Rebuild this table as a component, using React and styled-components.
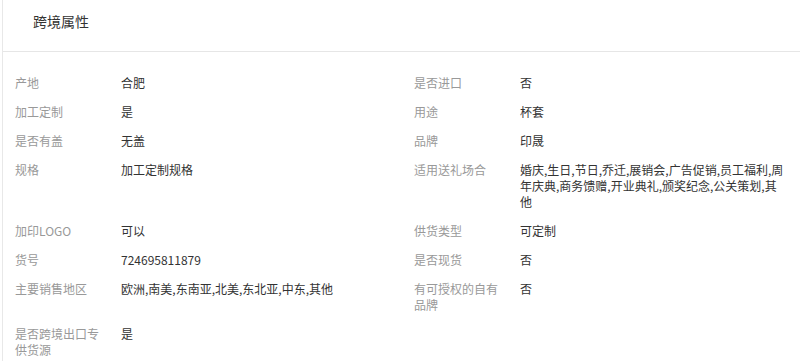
import React from "react";
import styled, { createGlobalStyle } from "styled-components";

const Global = createGlobalStyle`
  html, body { margin: 0; padding: 0; background: #fff; }
  body { font-family: "Noto Sans CJK SC", "Noto Sans", sans-serif; }
`;

const Panel = styled.section`
  margin-left: 2px;
  border-left: 1px solid #e8e8e8;
  background: #fff;
  min-height: 361px;
  box-sizing: border-box;
`;

const Header = styled.header`
  height: 52px;
  box-sizing: border-box;
  border-bottom: 1px solid #e6e6e6;
  display: flex;
  align-items: center;
  padding-left: 30px;
  padding-bottom: 10px;
  font-size: 14px;
  color: #333;
`;

const Grid = styled.div`
  display: grid;
  grid-template-columns: 372px 372px;
  column-gap: 27px;
  row-gap: 13px;
  padding: 23px 0 0 12px;
`;

const Item = styled.div`
  display: flex;
  align-items: flex-start;
  font-size: 12px;
  line-height: 16px;
`;

const Label = styled.div`
  width: 90px;
  margin-right: 16px;
  flex-shrink: 0;
  color: #999;
`;

const Value = styled.div`
  flex: 1;
  color: #333;
  word-break: break-all;
  line-break: anywhere;
`;

const rows = [
  ["产地", "合肥", "是否进口", "否"],
  ["加工定制", "是", "用途", "杯套"],
  ["是否有盖", "无盖", "品牌", "印晟"],
  [
    "规格",
    "加工定制规格",
    "适用送礼场合",
    "婚庆,生日,节日,乔迁,展销会,广告促销,员工福利,周年庆典,商务馈赠,开业典礼,颁奖纪念,公关策划,其他",
  ],
  ["加印LOGO", "可以", "供货类型", "可定制"],
  ["货号", "724695811879", "是否现货", "否"],
  ["主要销售地区", "欧洲,南美,东南亚,北美,东北亚,中东,其他", "有可授权的自有品牌", "否"],
  ["是否跨境出口专供货源", "是"],
];

export default function App() {
  return (
    <>
      <Global />
      <Panel>
        <Header>跨境属性</Header>
        <Grid>
          {rows.map((r, i) => (
            <React.Fragment key={i}>
              <Item>
                <Label>{r[0]}</Label>
                <Value>{r[1]}</Value>
              </Item>
              {r[2] ? (
                <Item>
                  <Label>{r[2]}</Label>
                  <Value>{r[3]}</Value>
                </Item>
              ) : (
                <div />
              )}
            </React.Fragment>
          ))}
        </Grid>
      </Panel>
    </>
  );
}
